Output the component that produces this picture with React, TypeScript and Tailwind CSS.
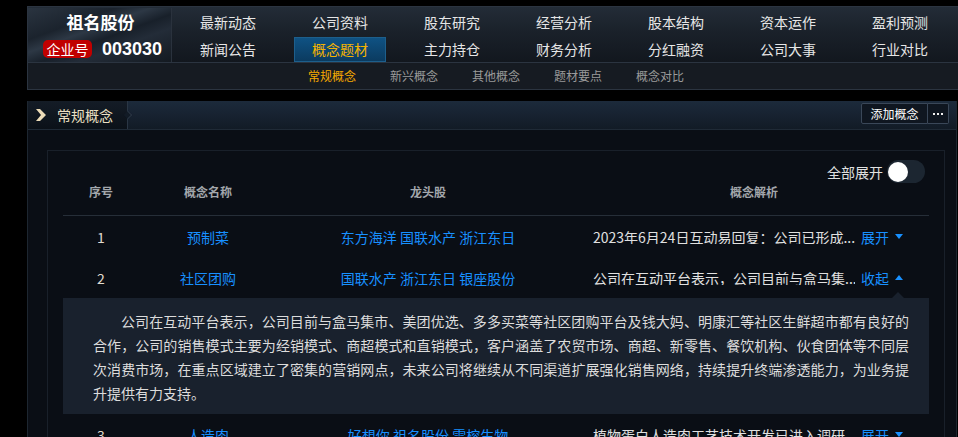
import React from "react";

const navRow1 = ["最新动态", "公司资料", "股东研究", "经营分析", "股本结构", "资本运作", "盈利预测"];
const navRow2 = ["新闻公告", "概念题材", "主力持仓", "财务分析", "分红融资", "公司大事", "行业对比"];
const subNav = ["常规概念", "新兴概念", "其他概念", "题材要点", "概念对比"];

type Row = { no: number; name: string; stocks: string[]; text: string; open: boolean };
const rows: Row[] = [
  { no: 1, name: "预制菜", stocks: ["东方海洋", "国联水产", "浙江东日"], text: "2023年6月24日互动易回复：公司已形成...", open: false },
  { no: 2, name: "社区团购", stocks: ["国联水产", "浙江东日", "银座股份"], text: "公司在互动平台表示，公司目前与盒马集...", open: true },
  { no: 3, name: "人造肉", stocks: ["好想你", "祖名股份", "雪榕生物"], text: "植物蛋白人造肉工艺技术开发已进入调研...", open: false },
];

const detail =
  "公司在互动平台表示，公司目前与盒马集市、美团优选、多多买菜等社区团购平台及钱大妈、明康汇等社区生鲜超市都有良好的合作，公司的销售模式主要为经销模式、商超模式和直销模式，客户涵盖了农贸市场、商超、新零售、餐饮机构、伙食团体等不同层次消费市场，在重点区域建立了密集的营销网点，未来公司将继续从不同渠道扩展强化销售网络，持续提升终端渗透能力，为业务提升提供有力支持。";

function Caret({ up }: { up: boolean }) {
  return (
    <svg width="8" height="5" viewBox="0 0 8 5" className="ml-[6px]">
      {up ? <polygon points="0,5 8,5 4,0" fill="#1890ff" /> : <polygon points="0,0 8,0 4,5" fill="#1890ff" />}
    </svg>
  );
}

function DataRow({ r }: { r: Row }) {
  return (
    <div className="flex h-[41px] items-center text-[14px]">
      <div className="w-[76px] text-center text-[#e2dccf]">{r.no}</div>
      <div className="w-[138px] text-center text-[#1890ff]">{r.name}</div>
      <div className="w-[302px] text-center text-[#1890ff] whitespace-nowrap">{r.stocks.join(" ")}</div>
      <div className="w-[350px] flex items-center pl-[14px]">
        <span className="w-[262px] whitespace-nowrap overflow-hidden text-[#e0e0e0]">{r.text}</span>
        <span className="ml-[6px] text-[#1890ff]">{r.open ? "收起" : "展开"}</span>
        <Caret up={r.open} />
      </div>
    </div>
  );
}

export default function App() {
  return (
    <div className="w-[958px] h-[437px] bg-black overflow-hidden font-['Noto_Sans_CJK_SC','Noto_Sans',sans-serif] leading-none">
      {/* Header */}
      <div className="pt-[6px] pl-[27px]">
        <div className="w-[931px] border-t border-l border-[#2b3440]">
          <div className="flex h-[55px] pt-[1px] bg-[linear-gradient(180deg,#232c37_0%,#1a212a_45%,#12171e_100%)]">
            <div className="w-[144px] border-r border-[#2a323d] flex flex-col bg-[linear-gradient(160deg,#2a3440_0%,#1b232d_30%,#2d3845_42%,#18202a_55%,#232c38_68%,#141a21_100%)]">
              <div className="h-[27px] flex items-center justify-center pl-[2px] text-[17px] font-bold text-white">祖名股份</div>
              <div className="h-[27px] flex items-center pl-[15px] gap-[10px]">
                <span className="w-[49px] h-[18px] rounded-[5px] bg-[#c00000] text-white text-[14px] flex items-center justify-center">企业号</span>
                <span className="font-['Liberation_Sans',Arial,sans-serif] font-bold text-[18px] text-white">003030</span>
              </div>
            </div>
            <div className="w-[784px] grid grid-cols-7 grid-rows-[27px_27px]">
              {navRow1.map((t) => (
                <div key={t} className="flex items-center justify-center text-[14px] text-[#e6e6e6]">{t}</div>
              ))}
              {navRow2.map((t) => (
                <div key={t} className="flex items-center justify-center text-[14px] text-[#e6e6e6]">
                  {t === "概念题材" ? (
                    <span className="mt-[1px] w-[92px] h-[25px] flex items-center justify-center border border-[#1d5f8c] bg-[linear-gradient(180deg,#0f5283_0%,#0b3b60_100%)] text-[#f5b400]">{t}</span>
                  ) : (
                    t
                  )}
                </div>
              ))}
            </div>
          </div>
          <div className="h-[28px] border-t border-b border-[#2b3440] bg-[#161b22] flex items-center pl-[280px] gap-[34px] text-[12px]">
            {subNav.map((t, i) => (
              <span key={t} className={i === 0 ? "text-[#f5a900]" : "text-[#9a9a9a]"}>{t}</span>
            ))}
          </div>
        </div>
      </div>

      {/* Panel */}
      <div className="mt-[11px] ml-[27px] w-[930px] border-l border-r border-[#1d2630] bg-[#0a0e15]">
        <div className="h-[29px] flex border-b border-[#1f2a36] bg-[linear-gradient(180deg,#1c2a3b_0%,#121b26_100%)]">
          <div className="relative w-[100px] flex items-center border-r border-[#2a3644] bg-[linear-gradient(180deg,#141c26_0%,#0b1118_100%)]">
            <svg width="10" height="12" viewBox="0 0 10 12" className="ml-[8px]">
              <polygon points="0,0 4,0 10,6 4,12 0,12 5,6" fill="#ecdcb8" />
            </svg>
            <span className="ml-[11px] text-[14px] text-[#ece0c4]">常规概念</span>
            <span className="absolute right-[-4px] top-[11px] w-[6px] h-[6px] rotate-45 border-t border-r border-[#2a3644] bg-[#121b26]"></span>
          </div>
          <div className="flex-1"></div>
          <div className="flex items-start pt-[2px] pr-[7px]">
            <span className="h-[21px] w-[67px] flex items-center justify-center border border-[#3a4758] rounded-l-[2px] bg-[#0f1620] text-[12px] text-white">添加概念</span>
            <span className="h-[21px] w-[21px] flex items-center justify-center gap-[2px] border border-l-0 border-[#3a4758] rounded-r-[2px] bg-[#0f1620]">
              <span className="w-[2px] h-[2px] bg-[#f0f0f0]"></span>
              <span className="w-[2px] h-[2px] bg-[#f0f0f0]"></span>
              <span className="w-[2px] h-[2px] bg-[#f0f0f0]"></span>
            </span>
          </div>
        </div>
        <div className="pl-[19px] pt-[20px]">
          <div className="w-[898px] h-[300px] border border-[#19202a] px-[15px] pt-[9px]">
            <div className="h-[23px] flex items-center justify-end pr-[4px]">
              <span className="text-[14px] text-[#e0e0e0] mr-[4px]">全部展开</span>
              <span className="w-[38px] h-[23px] rounded-full bg-[#1c2631] flex items-center pl-[1px]">
                <span className="w-[20px] h-[20px] rounded-full bg-white"></span>
              </span>
            </div>
            <div className="h-[33px] flex items-start border-b border-[#262e38] text-[12px] font-bold text-[#a3a7ac] leading-[18px]">
              <div className="w-[76px] text-center">序号</div>
              <div className="w-[138px] text-center">概念名称</div>
              <div className="w-[302px] text-center">龙头股</div>
              <div className="w-[350px] text-center">概念解析</div>
            </div>
            <DataRow r={rows[0]} />
            <DataRow r={rows[1]} />
            <div className="relative bg-[#19212d] pl-[30px] pr-[20px] pt-[11px] pb-[9px] text-[14px] leading-[24px] text-[#dcdcdc] text-justify indent-[2em]">
              <span className="absolute right-[25px] top-[-6px] w-0 h-0 border-l-[6px] border-r-[6px] border-b-[6px] border-l-transparent border-r-transparent border-b-[#19212d]"></span>
              {detail}
            </div>
            <DataRow r={rows[2]} />
          </div>
        </div>
      </div>
    </div>
  );
}
